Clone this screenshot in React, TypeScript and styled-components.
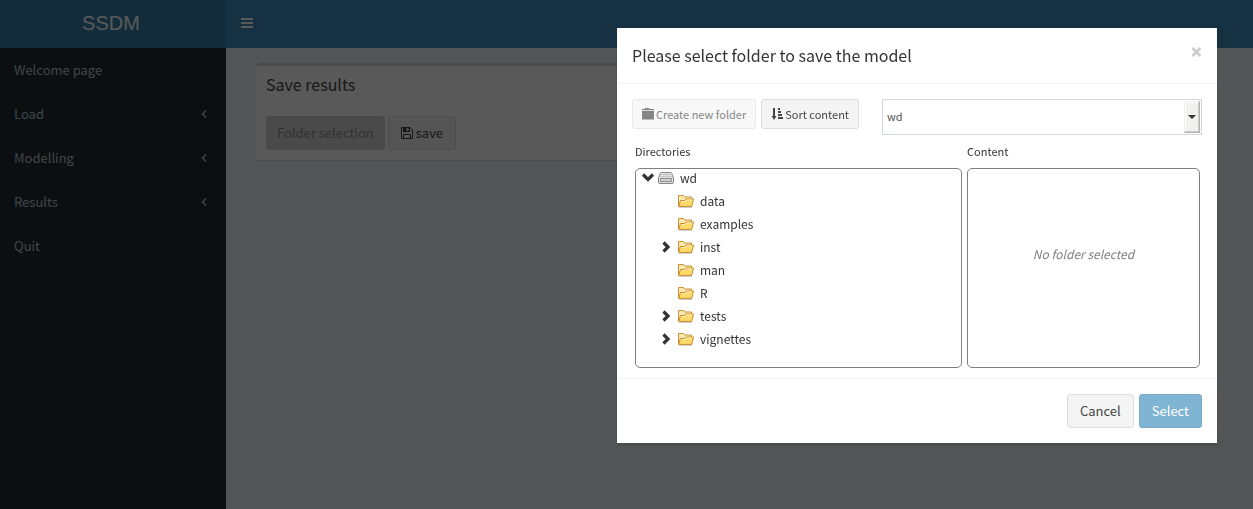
import React from "react";
import styled, { createGlobalStyle, css } from "styled-components";

const sans = '"Noto Sans CJK SC", "Open Sans", sans-serif';

const GlobalStyle = createGlobalStyle`
  *, *::before, *::after { box-sizing: border-box; }
  html, body { margin: 0; }
  body {
    font: 13px/20px ${sans};
    color: #333;
    background: #ecf0f5;
  }
  button, select { font-family: inherit; }
`;

const Page = styled.div`
  display: flex;
  flex-direction: column;
  min-height: 100vh;
`;

const Header = styled.header`
  display: flex;
  height: 48px;
  background: #3c8dbc;
`;

const Logo = styled.a`
  width: 226px;
  flex: none;
  background: #367fa9;
  color: #fff;
  font: 20px/47px "Liberation Sans", Arial, sans-serif;
  text-align: center;
  text-decoration: none;
  padding-right: 4px;
`;

const MenuToggle = styled.button`
  border: 0;
  background: none;
  color: #fff;
  padding: 0 15px 2px;
  display: flex;
  align-items: center;
`;

const Columns = styled.div`
  display: flex;
  flex: 1;
`;

const Sidebar = styled.nav`
  width: 226px;
  flex: none;
  background: #222d32;
`;

const MenuList = styled.ul`
  list-style: none;
  margin: 0;
  padding: 0;
`;

const MenuLink = styled.a`
  display: flex;
  align-items: center;
  justify-content: space-between;
  height: 44px;
  padding: 0 18px 0 14px;
  color: #b8c7ce;
  text-decoration: none;
`;

const Content = styled.main`
  flex: 1;
  padding: 15px 30px;
`;

const Box = styled.section`
  width: 50%;
  background: #fff;
  border-top: 3px solid #d2d6de;
  border-radius: 3px;
  box-shadow: 0 1px 1px rgba(0, 0, 0, 0.1);
`;

const BoxTitle = styled.h3`
  margin: 0;
  padding: 8px 10px 10px;
  font-size: 16px;
  line-height: 20px;
  font-weight: 400;
  color: #444;
`;

const BoxBody = styled.div`
  display: flex;
  gap: 3px;
  padding: 12px 10px 10px;
`;

const Button = styled.button<{ $tone?: "primary"; $small?: boolean }>`
  display: inline-flex;
  align-items: center;
  justify-content: center;
  gap: 2px;
  height: 34px;
  padding: 0 12px;
  border: 1px solid #ddd;
  border-radius: 3px;
  background: #f4f4f4;
  color: #444;
  font-size: 13px;
  line-height: 20px;
  white-space: nowrap;
  ${(p) => p.$small && css`
    height: 30px;
    padding: 0 9px 1px;
    font-size: 11px;
  `}
  ${(p) => p.$tone === "primary" && css`
    background: #3c8dbc;
    border-color: #367fa9;
    color: #fff;
  `}
  &:disabled { opacity: 0.65; }
`;

const PressedButton = styled(Button)`
  padding: 0 10px;
  background: #d4d4d4;
  border-color: #d0d0d0;
  color: #8c8c8c;
  &:disabled { opacity: 1; }
`;

const Overlay = styled.div`
  position: fixed;
  inset: 0;
  display: flex;
  justify-content: flex-end;
  align-items: flex-start;
  padding: 28px 36px;
  background: rgba(0, 0, 0, 0.65);
`;

const Dialog = styled.div`
  width: 600px;
  max-width: 100%;
  background: #fff;
  box-shadow: 0 2px 3px rgba(0, 0, 0, 0.125);
`;

const DialogHeader = styled.header`
  display: flex;
  justify-content: space-between;
  align-items: flex-start;
  padding: 15px;
  height: 56px;
  border-bottom: 1px solid #f4f4f4;
`;

const DialogTitle = styled.h4`
  margin: 0;
  font-size: 16px;
  line-height: 24px;
  font-weight: 400;
`;

const Close = styled.button`
  border: 0;
  padding: 4px 0;
  background: none;
  color: #ccc;
  display: flex;
`;

const DialogBody = styled.div`
  padding: 15px 15px 10px;
`;

const Toolbar = styled.div`
  display: flex;
  align-items: flex-start;
  gap: 5px;
`;

const VolumeField = styled.div`
  position: relative;
  width: 320px;
  margin-left: auto;
`;

const VolumeSelect = styled.select`
  display: block;
  appearance: none;
  width: 100%;
  height: 36px;
  padding: 0 4px 2px;
  border: 1px solid #d2d6de;
  border-radius: 0;
  background: #fff;
  color: #555;
  font-size: 11px;
`;

const SelectArrow = styled.span`
  position: absolute;
  top: 2px;
  right: 2px;
  bottom: 2px;
  width: 16px;
  display: flex;
  align-items: center;
  justify-content: center;
  background: #f0f0ef;
  border: 1px solid;
  border-color: #eee #b2b2b2 #b2b2b2 #eee;
  box-shadow: inset -1px -1px #ccc, inset 1px 1px #fff;
  pointer-events: none;
`;

const Panes = styled.div`
  display: grid;
  grid-template-columns: 327fr 233fr;
  gap: 5px;
  padding: 6px 2px 0 3px;
`;

const PaneLabel = styled.h5`
  margin: 0 0 7px;
  font-size: 11px;
  line-height: 20px;
  font-weight: 400;
`;

const Pane = styled.div`
  height: 200px;
  border: 1px solid #808080;
  border-radius: 5px;
  overflow: auto;
`;

const Tree = styled.ul`
  list-style: none;
  margin: 0;
  padding: 0 0 0 4px;
  font-size: 12px;
  line-height: 18px;
  & & { padding-left: 18px; }
`;

const TreeRow = styled.div<{ $nested?: boolean }>`
  display: grid;
  grid-template-columns: ${(p) => (p.$nested ? 18 : 16)}px 16px auto;
  column-gap: 2px;
  align-items: center;
  height: 23px;
  padding-bottom: 5px;
`;

const TreeName = styled.span`
  padding-left: 4px;
`;

const EmptyNote = styled.p`
  margin: 75px 0 0;
  text-align: center;
  font-size: 12px;
  font-style: italic;
  color: #808080;
`;

const DialogFooter = styled.footer`
  display: flex;
  justify-content: flex-end;
  gap: 5px;
  padding: 15px;
  border-top: 1px solid #f4f4f4;
`;

const Bars = () => (
  <svg width="12" height="10" viewBox="0 0 12 10" fill="currentColor" aria-hidden="true">
    <path d="M0 0h12v2H0zM0 4h12v2H0zM0 8h12v2H0z" />
  </svg>
);

const AngleLeft = () => (
  <svg width="8" height="10" viewBox="0 0 8 10" fill="none" stroke="currentColor" strokeWidth="1.5" aria-hidden="true">
    <path d="M6 1.500L2.500 5l3.500 3.500" />
  </svg>
);

const Floppy = () => (
  <svg width="13" height="12" viewBox="0 0 13 12" aria-hidden="true">
    <path d="M.5.5h8.500l2.500 2.500v8.500H.5zM2.500 11.500v-4h7v4" fill="none" stroke="currentColor" />
    <path fillRule="evenodd" d="M2 0h7v5H2zM5.500 1v3h2V1z" fill="currentColor" />
  </svg>
);

const FolderClosed = () => (
  <svg width="12" height="12" viewBox="0 0 12 12" fill="currentColor" aria-hidden="true">
    <path d="M0 1h2.500L3 0h4l.5 1H12v1.200H0zM0 3h12v8.500H0z" />
  </svg>
);

const SortIcon = () => (
  <svg width="12" height="12" viewBox="0 0 12 12" fill="currentColor" aria-hidden="true">
    <path d="M2 0h2v8h1.500L3 12 .5 8H2zM7 0h2v2H7zM7 3h3v2H7zM7 6h4v2H7zM7 9h5v2H7z" />
  </svg>
);

const CloseIcon = () => (
  <svg width="11" height="10" viewBox="0 0 11 10" fill="none" stroke="currentColor" strokeWidth="2.500" aria-hidden="true">
    <path d="M1.500 1l8 8M9.500 1l-8 8" />
  </svg>
);

const Caret = () => (
  <svg width="8" height="4" viewBox="0 0 8 4" fill="#333" aria-hidden="true">
    <path d="M0 0h8L4 4z" />
  </svg>
);

const Chevron = ({ open }: { open?: boolean }) => (
  <svg width="16" height="14" viewBox="0 0 16 14" fill="none" stroke="#333" strokeWidth="3.200" aria-hidden="true">
    <path d={open ? "M3 3.500L8 8.500 13 3.500" : "M5.500 2.500L10 7l-4.500 4.500"} />
  </svg>
);

const Drive = () => (
  <svg width="16" height="14" viewBox="0 0 16 14" aria-hidden="true">
    <path d="M3.500 1.500h9q1 0 1.300 1l1.700 4.500v4q0 1.500-1.500 1.500H2q-1.500 0-1.500-1.500V7l1.700-4.500q.3-1 1.300-1z" fill="#e2e2e2" stroke="#858585" />
    <path d="M3 3.500h10M2.500 5.500h11" stroke="#c4c4c4" />
    <path d="M2.500 7.500h11v3h-11z" fill="#d2d2d2" stroke="#8f8f8f" />
  </svg>
);

const FolderOpen = () => (
  <svg width="16" height="14" viewBox="0 0 16 14" aria-hidden="true">
    <path d="M1 13.300h13" stroke="#c4c4c4" />
    <path d="M.5 12V1.500h5l1 1.500h7v3" fill="#fbe9b0" stroke="#cc9136" />
    <path d="M.6 12.400L2.500 6.500h4L8 5h7.500l-1.800 7.400z" fill="#fdd968" stroke="#c98a2c" />
    <path d="M3.300 7.500h3.600L8.400 6h5.900" fill="none" stroke="#fff3c4" />
  </svg>
);

const menu = [
  { label: "Welcome page" },
  { label: "Load", nested: true },
  { label: "Modelling", nested: true },
  { label: "Results", nested: true },
  { label: "Quit" },
];

const folders = [
  { name: "data" },
  { name: "examples" },
  { name: "inst", nested: true },
  { name: "man" },
  { name: "R" },
  { name: "tests", nested: true },
  { name: "vignettes", nested: true },
];

export default function App() {
  return (
    <>
      <GlobalStyle />
      <Page>
        <Header>
          <Logo href="#">SSDM</Logo>
          <MenuToggle aria-label="Toggle navigation"><Bars /></MenuToggle>
        </Header>
        <Columns>
          <Sidebar>
            <MenuList>
              {menu.map((m) => (
                <li key={m.label}>
                  <MenuLink href="#">{m.label}{m.nested && <AngleLeft />}</MenuLink>
                </li>
              ))}
            </MenuList>
          </Sidebar>
          <Content>
            <Box>
              <BoxTitle>Save results</BoxTitle>
              <BoxBody>
                <PressedButton disabled>Folder selection</PressedButton>
                <Button><Floppy />save</Button>
              </BoxBody>
            </Box>
          </Content>
        </Columns>
      </Page>
      <Overlay>
        <Dialog role="dialog" aria-labelledby="dialog-title">
          <DialogHeader>
            <DialogTitle id="dialog-title">Please select folder to save the model</DialogTitle>
            <Close aria-label="Close"><CloseIcon /></Close>
          </DialogHeader>
          <DialogBody>
            <Toolbar>
              <Button $small disabled><FolderClosed />Create new folder</Button>
              <Button $small><SortIcon />Sort content</Button>
              <VolumeField>
                <VolumeSelect aria-label="Volume" defaultValue="wd"><option>wd</option></VolumeSelect>
                <SelectArrow><Caret /></SelectArrow>
              </VolumeField>
            </Toolbar>
            <Panes>
              <div>
                <PaneLabel>Directories</PaneLabel>
                <Pane>
                  <Tree>
                    <li>
                      <TreeRow><Chevron open /><Drive /><TreeName>wd</TreeName></TreeRow>
                      <Tree>
                        {folders.map((f) => (
                          <li key={f.name}>
                            <TreeRow $nested>
                              {f.nested ? <Chevron /> : <span />}
                              <FolderOpen />
                              <TreeName>{f.name}</TreeName>
                            </TreeRow>
                          </li>
                        ))}
                      </Tree>
                    </li>
                  </Tree>
                </Pane>
              </div>
              <div>
                <PaneLabel>Content</PaneLabel>
                <Pane><EmptyNote>No folder selected</EmptyNote></Pane>
              </div>
            </Panes>
          </DialogBody>
          <DialogFooter>
            <Button>Cancel</Button>
            <Button $tone="primary" disabled>Select</Button>
          </DialogFooter>
        </Dialog>
      </Overlay>
    </>
  );
}
